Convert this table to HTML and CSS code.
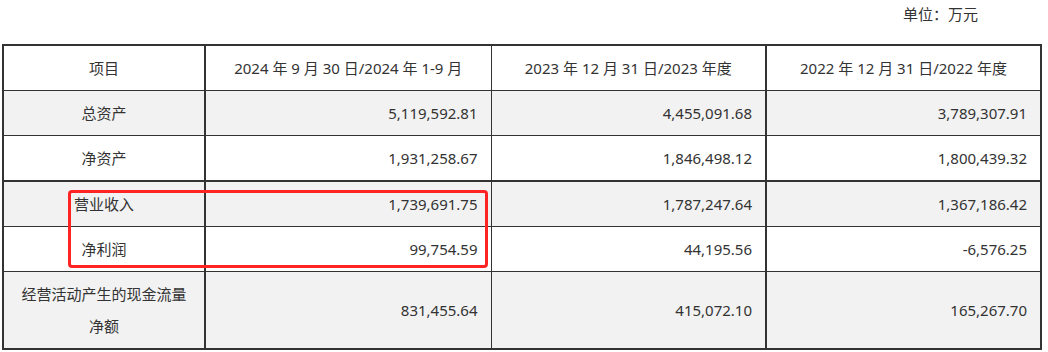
FILE: index.html
```html
<!DOCTYPE html>
<html lang="zh-CN">
<head>
<meta charset="utf-8">
<link rel="stylesheet" href="styles.css">
</head>
<body>
<div class="page">
  <div class="unit-line"><span class="unit">单位：万元</span></div>
  <div class="table-wrap">
    <table class="fin">
      <colgroup>
        <col class="c1"><col class="c2"><col class="c3"><col class="c4">
      </colgroup>
      <thead>
        <tr class="head">
          <th class="lbl">项目</th>
          <th class="mid">2024 年 9 月 30 日/2024 年 1-9 月</th>
          <th class="mid thick-r">2023 年 12 月 31 日/2023 年度</th>
          <th class="mid">2022 年 12 月 31 日/2022 年度</th>
        </tr>
      </thead>
      <tbody>
        <tr class="grey">
          <td class="lbl">总资产</td>
          <td class="num">5,119,592.81</td>
          <td class="num thick-r">4,455,091.68</td>
          <td class="num">3,789,307.91</td>
        </tr>
        <tr class="white thick-b">
          <td class="lbl">净资产</td>
          <td class="num">1,931,258.67</td>
          <td class="num thick-r">1,846,498.12</td>
          <td class="num">1,800,439.32</td>
        </tr>
        <tr class="grey">
          <td class="lbl">营业收入</td>
          <td class="num">1,739,691.75</td>
          <td class="num thick-r">1,787,247.64</td>
          <td class="num">1,367,186.42</td>
        </tr>
        <tr class="white">
          <td class="lbl">净利润</td>
          <td class="num">99,754.59</td>
          <td class="num thick-r">44,195.56</td>
          <td class="num">-6,576.25</td>
        </tr>
        <tr class="grey tall">
          <td class="lbl">经营活动产生的现金流量<br>净额</td>
          <td class="num">831,455.64</td>
          <td class="num thick-r">415,072.10</td>
          <td class="num">165,267.70</td>
        </tr>
      </tbody>
    </table>
    <div class="highlight"></div>
  </div>
</div>
</body>
</html>
```

FILE: styles.css
```css
html, body {
  margin: 0;
  padding: 0;
  background: #ffffff;
}
body {
  font-family: "Noto Sans", "Noto Sans CJK SC", sans-serif;
  font-size: 15px;
  color: #333333;
}
.page {
  width: 1048px;
  height: 352px;
  overflow: hidden;
}
.unit-line {
  display: flex;
  justify-content: flex-end;
  height: 28px;
  line-height: 28px;
  padding-right: 70px;
  margin-bottom: 16px;
}
.table-wrap {
  position: relative;
  margin-left: 2px;
  width: 1038px;
}
.fin {
  border-collapse: collapse;
  table-layout: fixed;
  width: 1038px;
  border: 2px solid #333333;
}
.c1 { width: 202px; }
.c2 { width: 286px; }
.c3 { width: 275px; }
.c4 { width: 275px; }
.fin th, .fin td {
  border: 1px solid #333333;
  padding: 6px 13px 6px 8px;
  line-height: 32px;
  font-weight: normal;
  white-space: nowrap;
}
.fin th.lbl, .fin td.lbl {
  border-right: 2px solid #333333;
  text-align: center;
  padding: 6px 4px;
}
.fin .thick-r {
  border-right-width: 2px;
}
.fin th.mid {
  text-align: center;
  padding: 6px 4px;
}
.fin td.num {
  text-align: right;
}
.head { height: 45px; }
.grey { background: #f2f2f2; }
.white { background: #ffffff; }
.thick-b td { border-bottom-width: 2px; }
.tall td { height: 64px; }
.highlight {
  position: absolute;
  left: 66px;
  top: 146px;
  width: 414px;
  height: 72px;
  border: 3px solid #ff2323;
  border-radius: 4px;
  pointer-events: none;
}
```
